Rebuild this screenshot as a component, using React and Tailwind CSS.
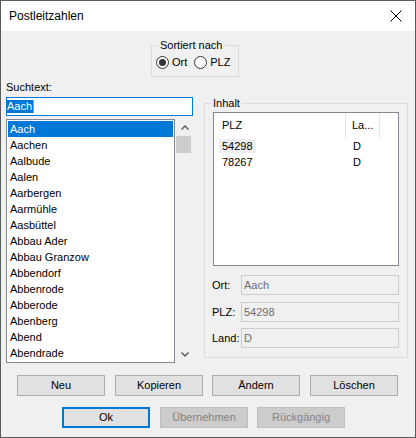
import React from "react";

const orte = [
  "Aach",
  "Aachen",
  "Aalbude",
  "Aalen",
  "Aarbergen",
  "Aarmühle",
  "Aasbüttel",
  "Abbau Ader",
  "Abbau Granzow",
  "Abbendorf",
  "Abbenrode",
  "Abberode",
  "Abenberg",
  "Abend",
  "Abendrade",
];

const treffer = [
  { plz: "54298", land: "D" },
  { plz: "78267", land: "D" },
];

function Radio({ checked, label }) {
  return (
    <label className="flex items-center gap-[3px] h-[13px]">
      <svg width="13" height="13" viewBox="0 0 13 13">
        <circle cx="6.5" cy="6.5" r="6" fill="#fff" stroke="#333" strokeWidth="1" />
        {checked && <circle cx="6.5" cy="6.5" r="3.5" fill="#333" />}
      </svg>
      <span className="leading-[13px]">{label}</span>
    </label>
  );
}

function Chevron({ up }) {
  return (
    <svg width="8" height="5" viewBox="0 0 8 5">
      <path
        d={up ? "M0.5 4.5 L4 1 L7.5 4.5" : "M0.5 0.5 L4 4 L7.5 0.5"}
        fill="none"
        stroke="#606060"
        strokeWidth="1.5"
      />
    </svg>
  );
}

function WinButton({ children, primary, disabled, className = "" }) {
  let look = "border border-[#adadad] bg-[#e1e1e1] text-black";
  if (primary) look = "border-2 border-[#0078d7] bg-[#e1e1e1] text-black";
  if (disabled) look = "border border-[#bfbfbf] bg-[#cccccc] text-[#838383]";
  return (
    <button
      type="button"
      className={`w-[88px] h-[21px] flex items-center justify-center leading-[13px] ${look} ${className}`}
    >
      {children}
    </button>
  );
}

function Feld({ label, value, className = "" }) {
  return (
    <div className={`flex items-center -ml-px ${className}`}>
      <span className="w-[29px] leading-[13px]">{label}</span>
      <div className="flex-1 h-[20px] border border-[#cccccc] bg-[#f0f0f0] text-[#6d6d6d] flex items-center pl-[2px] leading-[13px]">
        {value}
      </div>
    </div>
  );
}

export default function App() {
  return (
    <div
      className="w-[416px] h-[438px] border border-[#5b5b5b] flex flex-col text-[11px] text-black bg-[#f0f0f0]"
      style={{ fontFamily: '"Liberation Sans", Arial, sans-serif' }}
    >
      {/* Titelleiste */}
      <div className="h-[30px] bg-white flex items-center justify-between pl-[8px] pr-[13px]">
        <span className="text-[12px]">Postleitzahlen</span>
        <svg width="12" height="12" viewBox="0 0 12 12">
          <path d="M0.5 0.5 L11.5 11.5 M11.5 0.5 L0.5 11.5" stroke="#000" strokeWidth="1" />
        </svg>
      </div>

      <div className="flex-1 flex flex-col">
        {/* Sortierung */}
        <fieldset className="ml-[150px] mt-[8px] w-[88px] border border-[#dcdcdc] pl-[4px] pb-[7px]">
          <legend className="ml-[2px] px-[2px] leading-[13px]">Sortiert nach</legend>
          <div className="flex items-center mt-[4px]">
            <Radio checked label="Ort" />
            <div className="ml-[7px]">
              <Radio label="PLZ" />
            </div>
          </div>
        </fieldset>

        <div className="flex items-start">
          {/* Suche + Liste */}
          <div className="ml-[5px] w-[187px] flex flex-col">
            <span className="mt-[4px] leading-[13px]">Suchtext:</span>
            <div className="mt-[3px] h-[19px] border border-[#0078d7] bg-white flex items-center">
              <span className="bg-[#0078d7] text-white leading-[13px] pr-px">Aach</span>
              <span className="w-px h-[13px] bg-[#f28c28]" />
            </div>
            <div className="mt-[3px] flex">
              <div className="w-[169px] h-[244px] border border-[#828790] bg-white p-px">
                {orte.map((ort, i) => (
                  <div
                    key={ort}
                    className={`h-[16px] leading-[16px] pl-[2px] ${
                      i === 0 ? "bg-[#0078d7] text-white" : ""
                    }`}
                  >
                    {ort}
                  </div>
                ))}
              </div>
              <div className="w-[18px] h-[244px] flex flex-col">
                <div className="h-[17px] flex items-center justify-center pl-px">
                  <Chevron up />
                </div>
                <div className="ml-px w-[15px] h-[17px] bg-[#cdcdcd]" />
                <div className="flex-1" />
                <div className="h-[17px] flex items-center justify-center pl-px">
                  <Chevron />
                </div>
              </div>
            </div>
          </div>

          {/* Inhalt */}
          <fieldset className="ml-[11px] mt-[20px] w-[204px] border border-[#dcdcdc] px-[8px] pb-[9px]">
            <legend className="-ml-[2px] px-[2px] leading-[13px]">Inhalt</legend>
            <div className="mt-[2px] h-[154px] border border-[#828790] bg-white">
              <div className="h-[25px] flex">
                <div className="w-[132px] border-r border-[#e5e5e5] flex items-center pl-[8px]">
                  PLZ
                </div>
                <div className="w-[34px] border-r border-[#e5e5e5] flex items-center pl-[6px]">
                  La...
                </div>
              </div>
              {treffer.map((t, i) => (
                <div key={t.plz} className="h-[16px] flex items-center">
                  <div className="w-[132px] pl-[5px]">
                    <span
                      className={`inline-block leading-[14px] px-[3px] ${
                        i === 0 ? "bg-[#efefef]" : ""
                      }`}
                    >
                      {t.plz}
                    </span>
                  </div>
                  <div className="pl-[7px]">{t.land}</div>
                </div>
              ))}
            </div>
            <Feld label="Ort:" value="Aach" className="mt-[9px]" />
            <Feld label="PLZ:" value="54298" className="mt-[7px]" />
            <Feld label="Land:" value="D" className="mt-[6px]" />
          </fieldset>
        </div>

        {/* Schaltflächen */}
        <div className="flex mt-[12px] ml-[16px]">
          <WinButton>Neu</WinButton>
          <WinButton className="ml-[10px]">Kopieren</WinButton>
          <WinButton className="ml-[9px]">Ändern</WinButton>
          <WinButton className="ml-[10px]">Löschen</WinButton>
        </div>
        <div className="flex mt-[11px] ml-[61px]">
          <WinButton primary>Ok</WinButton>
          <WinButton disabled className="ml-[10px]">Übernehmen</WinButton>
          <WinButton disabled className="ml-[9px]">Rückgängig</WinButton>
        </div>
      </div>
    </div>
  );
}
